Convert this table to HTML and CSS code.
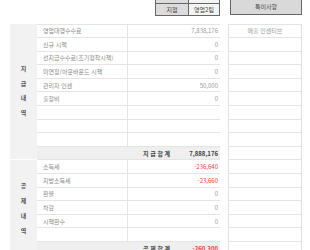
FILE: index.html
```html
<!DOCTYPE html>
<html lang="ko">
<head>
<meta charset="utf-8">
<link rel="stylesheet" href="styles.css">
</head>
<body>
<div class="page">
  <div class="top">
    <div class="mini">
      <div class="mini-row mini-hidden"><div class="mini-k"></div><div class="mini-v"></div></div>
      <div class="mini-row"><div class="mini-k">지점</div><div class="mini-v">영업2팀</div></div>
    </div>
    <div class="memo-head">특이사항</div>
  </div>
  <div class="main">
    <div class="ledger">
      <div class="section pay">
        <div class="vlabel"><span>지</span><span>급</span><span>내</span><span>역</span></div>
        <div class="row"><div class="item">영업대행수수료</div><div class="amt">7,838,176</div></div>
        <div class="row"><div class="item">신규 시책</div><div class="amt">0</div></div>
        <div class="row"><div class="item">선지급수수료(조기정착시책)</div><div class="amt">0</div></div>
        <div class="row"><div class="item">미연장/아웃바운드 시책</div><div class="amt">0</div></div>
        <div class="row"><div class="item">관리자 인센</div><div class="amt">50,000</div></div>
        <div class="row"><div class="item">출장비</div><div class="amt">0</div></div>
        <div class="row"><div class="item"></div><div class="amt"></div></div>
        <div class="row"><div class="item"></div><div class="amt"></div></div>
        <div class="row"><div class="item"></div><div class="amt"></div></div>
        <div class="row total"><div class="tlabel">지 급 합 계</div><div class="tamt">7,888,176</div></div>
      </div>
      <div class="section deduct">
        <div class="vlabel"><span>공</span><span>제</span><span>내</span><span>역</span></div>
        <div class="row"><div class="item">소득세</div><div class="amt neg">-236,640</div></div>
        <div class="row"><div class="item">지방소득세</div><div class="amt neg">-23,660</div></div>
        <div class="row"><div class="item">환불</div><div class="amt">0</div></div>
        <div class="row"><div class="item">차감</div><div class="amt">0</div></div>
        <div class="row"><div class="item">시책환수</div><div class="amt">0</div></div>
        <div class="row"><div class="item"></div><div class="amt"></div></div>
        <div class="row total"><div class="tlabel">공 제 합 계</div><div class="tamt neg">-260,300</div></div>
      </div>
    </div>
    <div class="memo">
      <div class="mrow mhead">매출 인센티브</div>
      <div class="mrow"></div><div class="mrow"></div><div class="mrow"></div>
      <div class="mrow"></div><div class="mrow"></div><div class="mrow"></div>
      <div class="mrow"></div><div class="mrow"></div><div class="mrow"></div>
      <div class="mrow"></div><div class="mrow"></div><div class="mrow"></div>
      <div class="mrow"></div><div class="mrow"></div><div class="mrow"></div>
      <div class="mrow"></div>
    </div>
  </div>
</div>
</body>
</html>
```
FILE: styles.css
```css
html, body {
  margin: 0;
  padding: 0;
  background: #ffffff;
}
body {
  font-family: "Noto Sans CJK KR", "Noto Sans", sans-serif;
  font-size: 6px;
  color: #888;
  overflow: hidden;
}
.page {
  padding: 0 8px 0 10px;
  width: 292px;
}
.top {
  display: flex;
  height: 16px;
}
.mini {
  margin-left: 145px;
  width: 65px;
  margin-top: -8px;
  display: flex;
  flex-direction: column;
}
.mini-row {
  display: flex;
  height: 12px;
  border: 1px solid #666;
  border-top: none;
  box-sizing: border-box;
}
.mini-hidden {
  border-top: 1px solid #666;
}
.mini-k {
  width: 32px;
  background: #dcdcdc;
  border-right: 1px solid #666;
  display: flex;
  align-items: center;
  justify-content: center;
  color: #444;
}
.mini-v {
  flex: 1;
  background: #f4f4f4;
  display: flex;
  align-items: center;
  justify-content: center;
  color: #444;
}
.memo-head {
  margin-left: auto;
  width: 72px;
  height: 18px;
  margin-top: -3px;
  box-sizing: border-box;
  background: #d9d9d9;
  border: 1px solid #666;
  display: flex;
  align-items: center;
  justify-content: center;
  color: #444;
  padding-top: 1px;
}
.main {
  display: flex;
  justify-content: space-between;
  margin-top: 7.5px;
}
.ledger {
  width: 210px;
}
.section {
  display: grid;
  grid-template-columns: 27px 91px 92px;
  grid-auto-rows: 13.6px;
}
.vlabel {
  grid-column: 1;
  background: #f2f2f2;
  display: flex;
  flex-direction: column;
  align-items: center;
  justify-content: center;
  font-weight: bold;
  color: #555;
}
.pay .vlabel { grid-row: 1 / span 10; line-height: 14.6px; }
.deduct .vlabel { grid-row: 1 / span 7; line-height: 15px; border-top: 1px solid #fff; box-sizing: border-box; }
.row {
  grid-column: 2 / span 2;
  display: grid;
  grid-template-columns: 91px 92px;
  border-top: 1px solid #e4e4e4;
  box-sizing: border-box;
}
.item {
  border-right: 1px solid #e4e4e4;
  padding-left: 6px;
  display: flex;
  align-items: center;
  color: #888;
  white-space: nowrap;
}
.amt {
  display: flex;
  align-items: center;
  justify-content: flex-end;
  padding-right: 2px;
  color: #999;
}
.neg {
  color: #ee3b3b;
}
.total {
  background: #efefef;
  display: flex;
  align-items: center;
}
.tlabel {
  margin-left: 106px;
  font-weight: bold;
  color: #444;
}
.tamt {
  margin-left: auto;
  padding-right: 2px;
  font-weight: bold;
  color: #444;
}
.tamt.neg {
  color: #ee3b3b;
}
.memo {
  width: 72px;
  border-left: 1px solid #e0e0e0;
  border-right: 1px solid #e0e0e0;
}
.mrow {
  height: 13.6px;
  border-top: 1px solid #e4e4e4;
  box-sizing: border-box;
}
.mhead {
  display: flex;
  align-items: center;
  justify-content: center;
  color: #999;
}
```
